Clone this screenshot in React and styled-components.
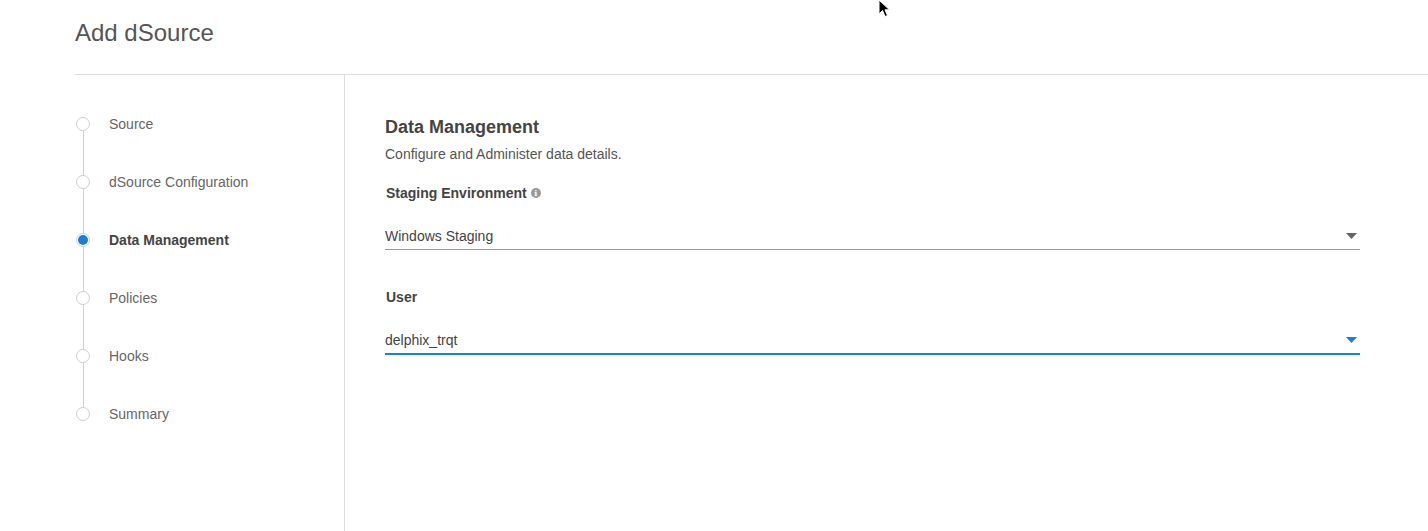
import React from 'react'
import styled, { createGlobalStyle } from 'styled-components';

const GlobalStyle = createGlobalStyle`
  html, body {
    margin: 0;
    padding: 0;
    background: #fff;
  }
  body {
    font-family: 'Liberation Sans', Arial, sans-serif;
    color: #555;
  }
`;

const steps = [
  { label: 'Source' },
  { label: 'dSource Configuration' },
  { label: 'Data Management', active: true },
  { label: 'Policies' },
  { label: 'Hooks' },
  { label: 'Summary' },
];

const Caret = ({ color }) => (
  <svg width="11" height="6" viewBox="0 0 11 6">
    <path d="M0 0 L11 0 L5.5 6 Z" fill={color} />
  </svg>
);

const Cursor = () => (
  <CursorWrap>
    <svg width="14" height="20" viewBox="0 0 14 20">
      <path d="M1 1 L1 15 L4.5 11.5 L7 17.5 L9.5 16.5 L7 10.8 L11.5 10.8 Z" fill="#000" stroke="#fff" strokeWidth="1" />
    </svg>
  </CursorWrap>
);

const App = () => {
  return (
    <Page>
      <GlobalStyle />
      <Cursor />
      <Header>
        <Title>Add dSource</Title>
      </Header>
      <Body>
        <Sidebar>
          {steps.map((step, i) => (
            <Step key={step.label} $first={i === 0} $last={i === steps.length - 1}>
              <Dot $active={step.active}>{step.active && <DotFill />}</Dot>
              <StepLabel $active={step.active}>{step.label}</StepLabel>
            </Step>
          ))}
        </Sidebar>
        <Content>
          <Heading>Data Management</Heading>
          <Description>Configure and Administer data details.</Description>
          <Field>
            <Label>
              Staging Environment
              <InfoIcon>i</InfoIcon>
            </Label>
            <Select>
              <SelectValue>Windows Staging</SelectValue>
              <Caret color="#666" />
            </Select>
          </Field>
          <Field>
            <Label>User</Label>
            <Select $focused>
              <SelectValue>delphix_trqt</SelectValue>
              <Caret color="#1a7fd6" />
            </Select>
          </Field>
        </Content>
      </Body>
    </Page>
  )
}

export default App

const Page = styled.div`
  position: relative;
  width: 1428px;
  height: 531px;
  overflow: hidden;
  padding-left: 75px;
  box-sizing: border-box;
  display: flex;
  flex-direction: column;
`;

const CursorWrap = styled.div`
  position: absolute;
  left: 878px;
  top: -1px;
  line-height: 0;
`;

const Header = styled.div`
  height: 75px;
  border-bottom: 1px solid #dcdcdc;
  display: flex;
  align-items: flex-start;
  padding-top: 19px;
  box-sizing: border-box;
`;

const Title = styled.h1`
  margin: 0;
  font-size: 24px;
  font-weight: normal;
  line-height: 28px;
  color: #555;
`;

const Body = styled.div`
  flex: 1;
  display: flex;
`;

const Sidebar = styled.div`
  width: 270px;
  border-right: 1px solid #dcdcdc;
  padding-top: 20px;
  box-sizing: border-box;
  display: flex;
  flex-direction: column;
`;

const Step = styled.div`
  position: relative;
  height: 58px;
  display: flex;
  align-items: center;
  padding-left: 1px;

  &::before {
    content: '';
    position: absolute;
    left: 8px;
    width: 1px;
    background: #cfcfcf;
    top: ${(p) => (p.$first ? '36px' : '0')};
    bottom: ${(p) => (p.$last ? '36px' : '0')};
  }
`;

const Dot = styled.div`
  position: relative;
  z-index: 1;
  width: 14px;
  height: 14px;
  border-radius: 50%;
  border: 1px solid #cfcfcf;
  background: #fff;
  box-sizing: border-box;
  display: flex;
  align-items: center;
  justify-content: center;
`;

const DotFill = styled.div`
  width: 10px;
  height: 10px;
  border-radius: 50%;
  background: #1a7fd6;
`;

const StepLabel = styled.span`
  margin-left: 19px;
  font-size: 14px;
  color: ${(p) => (p.$active ? '#444' : '#666')};
  font-weight: ${(p) => (p.$active ? 'bold' : 'normal')};
`;

const Content = styled.div`
  flex: 1;
  padding: 41px 68px 0 40px;
  display: flex;
  flex-direction: column;
`;

const Heading = styled.h2`
  margin: 0;
  font-size: 18px;
  line-height: 22px;
  font-weight: bold;
  color: #444;
`;

const Description = styled.p`
  margin: 7px 0 0;
  font-size: 14px;
  line-height: 18px;
  color: #555;
`;

const Field = styled.div`
  display: flex;
  flex-direction: column;
  margin-top: 21px;
`;

const Label = styled.div`
  display: flex;
  align-items: center;
  font-size: 14px;
  line-height: 18px;
  font-weight: bold;
  color: #444;
  padding-left: 1px;
`;

const InfoIcon = styled.span`
  margin-left: 4px;
  width: 10px;
  height: 10px;
  border-radius: 50%;
  background: #9a9a9a;
  color: #fff;
  font-size: 8px;
  line-height: 10px;
  font-weight: bold;
  text-align: center;
  font-family: 'DejaVu Serif', serif;
`;

const Select = styled.div`
  margin-top: 20px;
  margin-bottom: 17px;
  height: ${(p) => (p.$focused ? '29px' : '28px')};
  display: flex;
  align-items: center;
  justify-content: space-between;
  padding-right: 3px;
  border-bottom: ${(p) => (p.$focused ? '2px solid #1a7fd6' : '1px solid #9a9a9a')};
  box-sizing: border-box;
`;

const SelectValue = styled.span`
  font-size: 14px;
  color: #444;
`;
